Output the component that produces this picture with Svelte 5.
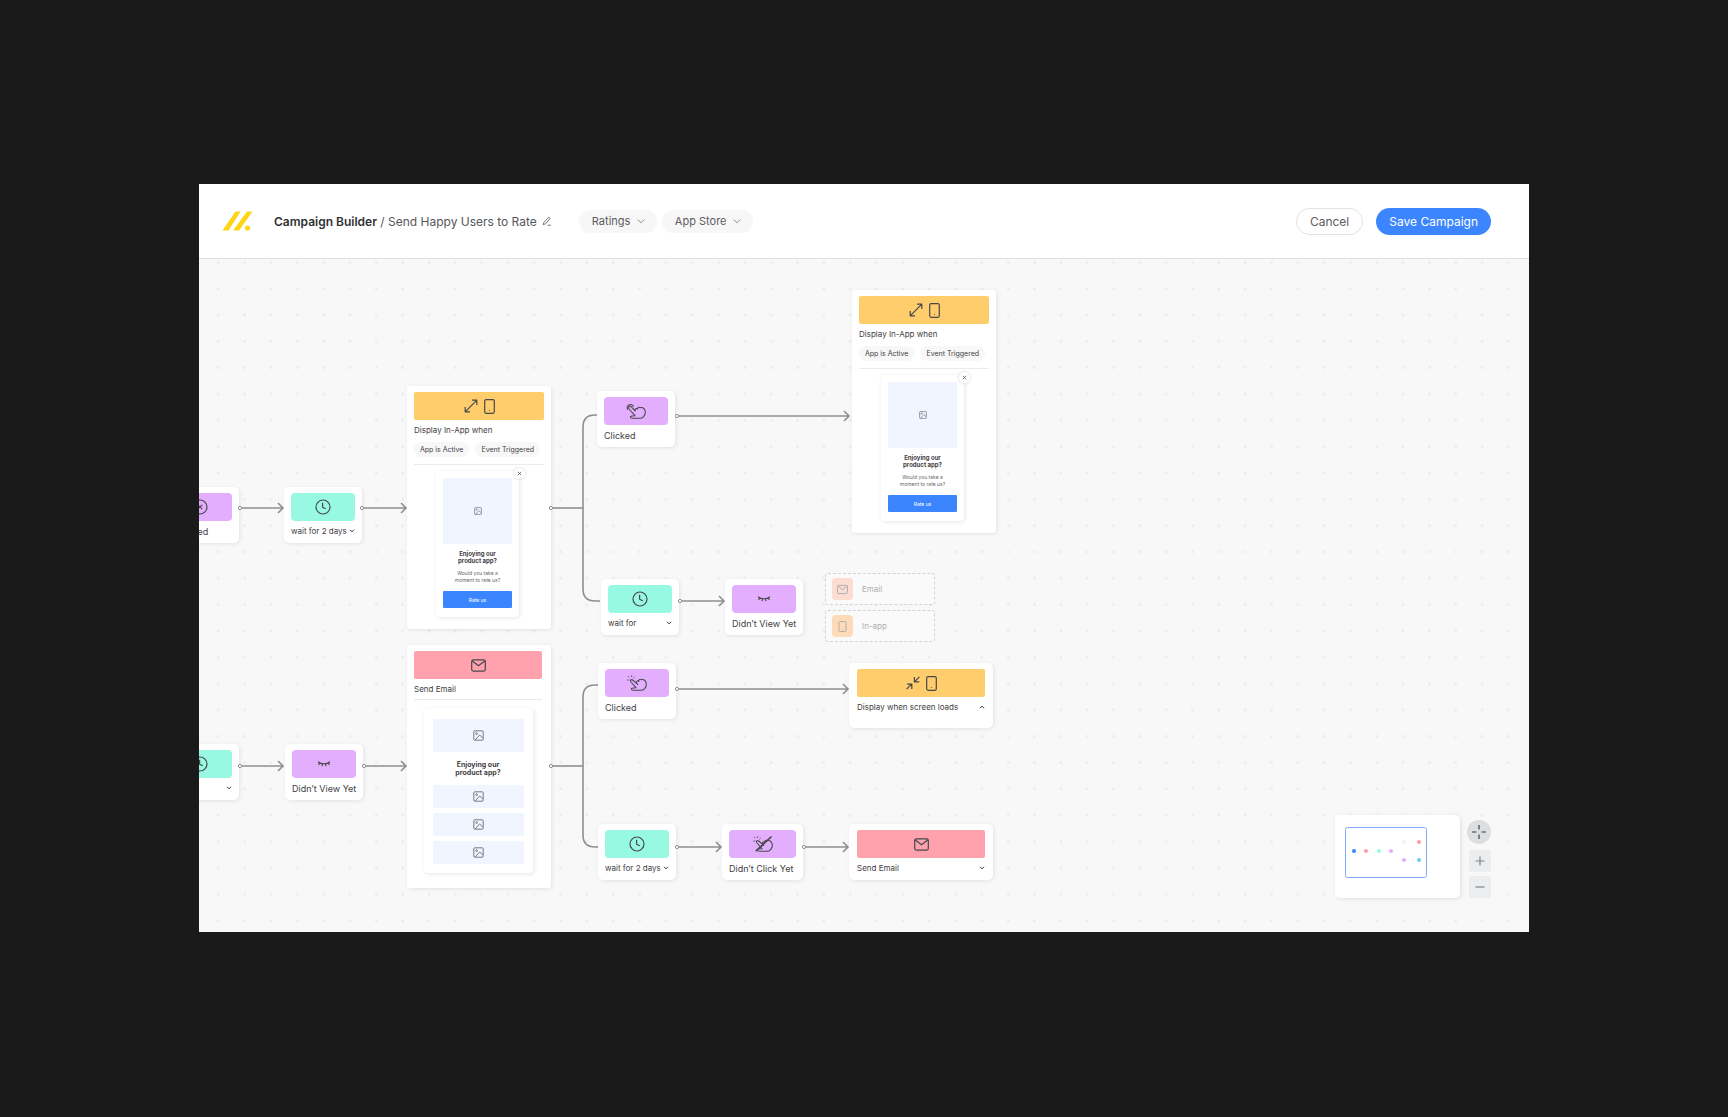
<script lang="ts">
	interface FlowNode {
		id: string;
		type: 'step' | 'inapp' | 'email' | 'action';
		x: number;
		y: number;
		width: number;
		color: string;
		icon: string;
		label: string;
		select?: boolean;
		chevron?: 'up' | 'down';
		tall?: boolean;
	}

	const nodes: FlowNode[] = [
		{ id: 'delivered', type: 'step', x: -38, y: 228, width: 78, color: 'purple', icon: 'cross', label: 'Delivered' },
		{ id: 'wait-1', type: 'step', x: 85, y: 228, width: 78, color: 'teal', icon: 'clock', label: 'wait for 2 days', select: true },
		{ id: 'inapp-1', type: 'inapp', x: 208, y: 127, width: 144, color: 'yellow', icon: 'expand', label: 'Display In-App when' },
		{ id: 'clicked-1', type: 'step', x: 398, y: 132, width: 78, color: 'purple', icon: 'tap', label: 'Clicked' },
		{ id: 'inapp-2', type: 'inapp', x: 653, y: 31, width: 144, color: 'yellow', icon: 'expand', label: 'Display In-App when' },
		{ id: 'wait-2', type: 'step', x: 402, y: 320, width: 78, color: 'teal', icon: 'clock', label: 'wait for', select: true },
		{ id: 'no-view-1', type: 'step', x: 526, y: 320, width: 78, color: 'purple', icon: 'eye', label: 'Didn’t View Yet' },
		{ id: 'wait-3', type: 'step', x: -38, y: 485, width: 78, color: 'teal', icon: 'clock', label: 'wait', select: true },
		{ id: 'no-view-2', type: 'step', x: 86, y: 485, width: 78, color: 'purple', icon: 'eye', label: 'Didn’t View Yet' },
		{ id: 'email-1', type: 'email', x: 208, y: 386, width: 144, color: 'red', icon: 'mail', label: 'Send Email' },
		{ id: 'clicked-2', type: 'step', x: 399, y: 404, width: 78, color: 'purple', icon: 'spark', label: 'Clicked' },
		{ id: 'wait-4', type: 'step', x: 399, y: 565, width: 78, color: 'teal', icon: 'clock', label: 'wait for 2 days', select: true },
		{ id: 'no-click', type: 'step', x: 523, y: 565, width: 81, color: 'purple', icon: 'noclick', label: 'Didn’t Click Yet' },
		{ id: 'screen-loads', type: 'action', x: 650, y: 404, width: 144, color: 'yellow', icon: 'collapse', label: 'Display when screen loads', chevron: 'up', tall: true },
		{ id: 'email-2', type: 'action', x: 650, y: 565, width: 144, color: 'red', icon: 'mail', label: 'Send Email', chevron: 'down' }
	];

	const arrows = [
		{ x1: 41, x2: 85, y: 249 },
		{ x1: 163, x2: 208, y: 249 },
		{ x1: 478, x2: 651, y: 157 },
		{ x1: 481, x2: 526, y: 342 },
		{ x1: 41, x2: 85, y: 507 },
		{ x1: 165, x2: 208, y: 507 },
		{ x1: 478, x2: 650, y: 430 },
		{ x1: 478, x2: 523, y: 588 },
		{ x1: 605, x2: 650, y: 588 }
	];

	// one output that splits to two nodes
	const branches = [
		{ x: 352, y: 249, top: 156, bottom: 342, endTop: 398, endBottom: 401 },
		{ x: 352, y: 507, top: 426, bottom: 588, endTop: 399, endBottom: 399 }
	];

	const options = [
		{ id: 'email', label: 'Email', icon: 'mail' },
		{ id: 'in-app', label: 'In-app', icon: 'phone' }
	];

	const mapDots = [
		{ x: 7, y: 23, fill: '#3b86ff' },
		{ x: 19, y: 23, fill: '#ff9fa8' },
		{ x: 32, y: 23, fill: '#97f9e1' },
		{ x: 44, y: 23, fill: '#e4aeff' },
		{ x: 57, y: 14, fill: '#eef4ff' },
		{ x: 72, y: 14, fill: '#ff9fa8' },
		{ x: 57, y: 32, fill: '#e4aeff' },
		{ x: 72, y: 32, fill: '#74cdea' }
	];
</script>

{#snippet chevron(up = false)}
	<svg class="chevron" class:up width="6" height="4" viewBox="0 0 6 4" aria-hidden="true">
		<path d="M1 .8 3 2.8 5 .8" />
	</svg>
{/snippet}

{#snippet picture(size: number)}
	<svg class="picture" width={size} height={size} viewBox="0 0 20 20" aria-hidden="true">
		<rect x="1.5" y="1.5" width="17" height="17" rx="1.5" />
		<circle cx="6.5" cy="6.5" r="1.6" />
		<path d="M4 18 12 9l6 5.5" />
	</svg>
{/snippet}

{#snippet phone()}
	<svg class="icon" width="11" height="15" viewBox="0 0 11 15" aria-hidden="true">
		<rect x=".7" y=".7" width="9.6" height="13.6" rx="1.5" />
		<path d="M5.5 11.3v.7" />
	</svg>
{/snippet}

{#snippet mail()}
	<svg class="icon" width="15" height="13" viewBox="0 0 15 13" aria-hidden="true">
		<rect x=".7" y=".9" width="13.6" height="11.2" rx="1.5" />
		<path d="M1 1.8 7.5 6.8 14 1.8" />
	</svg>
{/snippet}

{#snippet icon(name: string)}
	{#if name === 'clock'}
		<svg class="icon" width="16" height="16" viewBox="0 0 16 16" aria-hidden="true">
			<circle cx="8" cy="8" r="7" />
			<path d="M7.6 3.8v4.4l3.2 1.6" />
		</svg>
	{:else if name === 'cross'}
		<svg class="icon" width="16" height="16" viewBox="0 0 16 16" aria-hidden="true">
			<circle cx="8" cy="8" r="7" />
			<path d="m5.8 5.8 4.4 4.4m0-4.4-4.4 4.4" />
		</svg>
	{:else if name === 'eye'}
		<svg class="icon" width="14" height="6" viewBox="0 0 14 6" aria-hidden="true">
			<path d="M1 .7C4 3.4 10 3.4 13 .7M2.8 2 1.6 4M5.6 2.8 5 5.2M8.4 2.8 9 5.2M11.2 2l1.2 2" />
		</svg>
	{:else if name === 'tap' || name === 'spark' || name === 'noclick'}
		<svg class="hand" width="20" height="16" viewBox="0 0 60 48" aria-hidden="true">
			{#if name === 'tap'}
				<path d="M5 19A9.5 9.5 0 1 1 22 10" />
				<path d="M15 11 28 24C26 18 30 14 35 18 35 13 40 11 43 14 51 11 58 19 58 28 58 38 50 46 42 46H19C12 46 11 40 18 39L27 38 9 18C5 12 11 7 15 11Z" />
			{:else}
				<path class="spark" d="M2 15h4M4 4l2 2M14 2v3M22 7l-2 2" />
				<path d="M17 15 29 25C27 19 31 15 35 19 35 14 40 11 43 14 51 11 58 19 58 28 58 38 50 46 42 46H19C12 46 11 40 18 39L27 38 12 21C8 16 13 12 17 15ZM29 25l3 3" />
			{/if}
			{#if name === 'noclick'}
				<path class="slash" d="M10 44 54 3" />
			{/if}
		</svg>
	{:else if name === 'mail'}
		{@render mail()}
	{:else if name === 'expand'}
		<svg class="icon" width="14" height="14" viewBox="0 0 14 14" aria-hidden="true">
			<path d="M1.2 12.8 12.8 1.2M8 1.2h4.8V6M1.2 8v4.8H6" />
		</svg>
		{@render phone()}
	{:else if name === 'collapse'}
		<svg class="icon" width="14" height="14" viewBox="0 0 14 14" aria-hidden="true">
			<path d="M13.4.8 8.6 5.6M8.4 1v4.8h4.8M.6 13.2 5.4 8.4M1 8.2h4.8V13" />
		</svg>
		{@render phone()}
	{/if}
{/snippet}

<div class="page">
	<div class="window">
		<header class="header">
			<svg class="logo" width="31" height="20" viewBox="0 0 31 20" aria-label="Logo">
				<path d="M13.5.5h5L6.5 19.5H.5ZM25 .5h5.5L17 19.5h-6Z" />
				<circle cx="25.5" cy="17" r="2.6" />
			</svg>
			<h1 class="title"><strong>Campaign Builder</strong> / Send Happy Users to Rate</h1>
			<button class="edit" aria-label="Rename campaign">
				<svg width="10" height="10" viewBox="0 0 10 10">
					<path d="M1.2 8.6 2 6.2 6.8 1.2 8.2 2.4 3.6 7.8ZM5.5 9.2H9" />
				</svg>
			</button>
			<div class="filters">
				<label class="pill">
					<select aria-label="Goal"><option>Ratings</option></select>
					{@render chevron()}
				</label>
				<label class="pill">
					<select aria-label="Channel"><option>App Store</option></select>
					{@render chevron()}
				</label>
			</div>
			<div class="actions">
				<button class="cancel">Cancel</button>
				<button class="save">Save Campaign</button>
			</div>
		</header>

		<main class="canvas">
			<svg class="wires" width="100%" height="100%" aria-hidden="true">
				<defs>
					<pattern id="dots" x="6" y="-10" width="26.33" height="26.33" patternUnits="userSpaceOnUse">
						<circle cx="13.3" cy="13.3" r="1.4" fill="#ebebec" />
					</pattern>
				</defs>
				<rect width="100%" height="100%" fill="url(#dots)" />
			</svg>

			{#each nodes as node (node.id)}
				<section
					class="node {node.type}"
					class:tall={node.tall}
					style="left: {node.x}px; top: {node.y}px; width: {node.width}px"
				>
					<div class="banner {node.color}">{@render icon(node.icon)}</div>
					{#if node.select}
						<label class="label wait">
							<select aria-label="Delay"><option>{node.label}</option></select>
							{@render chevron()}
						</label>
					{:else if node.type === 'action'}
						<button class="label toggle">
							{node.label}
							{@render chevron(node.chevron === 'up')}
						</button>
					{:else}
						<div class="label">{node.label}</div>
					{/if}

					{#if node.type === 'inapp'}
						<div class="tags">
							<span>App is Active</span>
							<span>Event Triggered</span>
						</div>
						<hr />
						<div class="popup">
							<button class="close" aria-label="Close">
								<svg width="5" height="5" viewBox="0 0 5 5"><path d="m.8.8 3.4 3.4m0-3.4L.8 4.2" /></svg>
							</button>
							<div class="image">{@render picture(8)}</div>
							<h2>Enjoying our<br />product app?</h2>
							<p>Would you take a<br />moment to rate us?</p>
							<button class="rate">Rate us</button>
						</div>
					{:else if node.type === 'email'}
						<hr />
						<div class="letter">
							<div class="image hero">{@render picture(11)}</div>
							<h2>Enjoying our<br />product app?</h2>
							<div class="rows">
								{#each [1, 2, 3] as row (row)}
									<div class="image">{@render picture(11)}</div>
								{/each}
							</div>
						</div>
					{/if}
				</section>
			{/each}

			<div class="options">
				{#each options as option (option.id)}
					<button class="option">
						<span class="option-icon {option.id}">
							{#if option.icon === 'mail'}{@render mail()}{:else}{@render phone()}{/if}
						</span>
						{option.label}
					</button>
				{/each}
			</div>

			<svg class="wires" width="100%" height="100%" aria-hidden="true">
				{#each branches as b}
					<path d="M{b.x + 2} {b.y}H384" />
					<path
						d="M{b.endTop} {b.top}H396Q384 {b.top} 384 {b.top + 12}V{b.bottom - 12}Q384 {b.bottom} 396 {b.bottom}H{b.endBottom}"
					/>
					<circle cx={b.x} cy={b.y} r="1.6" />
				{/each}
				{#each arrows as a}
					<path d="M{a.x1 + 2} {a.y}H{a.x2 - 1}M{a.x2 - 6} {a.y - 5}L{a.x2 - 1} {a.y}L{a.x2 - 6} {a.y + 5}" />
					<circle cx={a.x1} cy={a.y} r="1.6" />
				{/each}
			</svg>

			<div class="tools">
				<div class="minimap">
					<svg width="83" height="52" viewBox="0 0 83 52" aria-label="Map">
						<rect x=".5" y=".5" width="81" height="50" rx="2" />
						{#each mapDots as dot}
							<circle cx={dot.x + 2} cy={dot.y + 1} r="2.1" fill={dot.fill} />
						{/each}
					</svg>
				</div>
				<div class="zoom">
					<button class="center" aria-label="Center">
						<svg width="14" height="14" viewBox="0 0 14 14"><path d="M7 0v4.5M7 9.5V14M0 7h4.5M9.5 7H14" /></svg>
					</button>
					<button aria-label="Zoom in">
						<svg width="10" height="10" viewBox="0 0 10 10"><path d="M5 .5v9M.5 5h9" /></svg>
					</button>
					<button aria-label="Zoom out">
						<svg width="10" height="10" viewBox="0 0 10 10"><path d="M.5 5h9" /></svg>
					</button>
				</div>
			</div>
		</main>
	</div>
</div>

<style>
	:global(body) {
		background-color: #1a1a1a;
	}

	.page {
		box-sizing: border-box;
		min-height: 100vh;
		padding: 184px 199px 185px;
		display: flex;
		font-family: Inter, 'Open Sans', sans-serif;
		color: #3f4043;
	}

	button,
	select {
		padding: 0;
		border: none;
		background: none;
		font: inherit;
		color: inherit;
		cursor: pointer;
	}

	select {
		appearance: none;
	}

	svg {
		display: block;
		flex-shrink: 0;
		fill: none;
	}

	.window {
		flex: 1;
		min-width: 0;
		display: flex;
		flex-direction: column;
		overflow: hidden;
		background-color: #f8f8f8;
	}

	.header {
		display: flex;
		align-items: center;
		height: 74px;
		padding: 0 38px 0 23px;
		background-color: #fff;
		border-bottom: 1px solid #e0e0e1;
		font-size: 12px;
	}

	.logo {
		margin-right: 21px;
		fill: #ffd414;
	}

	.title {
		margin: 0;
		font-size: 12px;
		font-weight: 400;
		white-space: nowrap;
		color: #55565a;
	}

	.title strong {
		font-weight: 600;
		color: #303134;
	}

	.edit {
		margin-left: 5px;
	}

	.edit svg {
		stroke: #55565a;
		stroke-width: 0.8;
	}

	.filters {
		display: flex;
		gap: 5px;
		margin-left: 27px;
		font-size: 11px;
		color: #5c5d61;
	}

	.pill {
		display: flex;
		align-items: center;
		gap: 5px;
		height: 23px;
		padding: 0 11px 0 13px;
		border-radius: 12px;
		background-color: #f7f7f7;
	}

	.chevron {
		stroke: #2c2d30;
		stroke-width: 1;
	}

	.chevron.up {
		transform: rotate(180deg);
	}

	.pill .chevron {
		width: 10px;
		height: 7px;
		stroke: #77787c;
		stroke-width: 0.5;
	}

	.actions {
		display: flex;
		gap: 13px;
		margin-left: auto;
		font-size: 12px;
	}

	.actions button {
		height: 27px;
		padding: 0 13px;
		border-radius: 14px;
		white-space: nowrap;
	}

	.actions .cancel {
		border: 1px solid #e2e2e3;
		background-color: #fff;
		color: #5c5d61;
	}

	.actions .save {
		background-color: #3b86ff;
		color: #fff;
	}

	.canvas {
		position: relative;
		flex: 1;
		min-height: 640px;
	}

	.wires {
		position: absolute;
		inset: 0;
		stroke: #8e8f92;
		stroke-width: 1.6;
		pointer-events: none;
	}

	.wires rect,
	.wires pattern circle {
		stroke: none;
	}

	.wires > circle {
		fill: #fff;
		stroke-width: 1;
	}

	.node {
		position: absolute;
		box-sizing: border-box;
		min-height: 56px;
		padding: 6px 7px 0;
		border-radius: 5px;
		background-color: #fff;
		box-shadow: 1px 1px 4px rgba(0, 0, 0, 0.09);
		font-size: 8px;
	}

	.node.step {
		font-size: 9px;
	}

	.node.inapp,
	.node.email {
		min-height: 243px;
		border-radius: 3px;
	}

	.node.email {
		padding-right: 9px;
	}

	.node.action {
		padding: 6px 8px 0;
	}

	.node.tall {
		min-height: 65px;
	}

	.banner {
		display: flex;
		align-items: center;
		justify-content: center;
		gap: 6px;
		height: 28px;
		border-radius: 4px;
	}

	.inapp .banner,
	.email .banner,
	.action .banner {
		border-radius: 2px;
	}

	.purple {
		background-color: #e4aeff;
	}

	.teal {
		background-color: #97f9e1;
	}

	.yellow {
		background-color: #ffcd6b;
	}

	.red {
		background-color: #ffa2ad;
	}

	.icon,
	.hand {
		stroke: #47484b;
		stroke-width: 1.2;
		stroke-linejoin: round;
	}

	.hand {
		stroke-width: 3.2;
		stroke-linecap: round;
	}

	.hand .spark {
		stroke-width: 2.4;
	}

	.hand .slash {
		stroke-width: 5;
	}

	.label {
		display: flex;
		align-items: center;
		justify-content: space-between;
		width: 100%;
		height: 20px;
		white-space: nowrap;
	}

	.toggle,
	.wait {
		font-size: 8px;
	}

	.tags {
		display: flex;
		gap: 6px;
		margin: 2px 0 7px;
		font-size: 7px;
	}

	.tags span {
		padding: 0 6px;
		border-radius: 8px;
		background-color: #f7f7f7;
		line-height: 15px;
		white-space: nowrap;
	}

	hr {
		height: 1px;
		margin: 0;
		border: none;
		background-color: #ebebec;
	}

	.popup,
	.letter {
		position: relative;
		box-sizing: border-box;
		border-radius: 4px;
		background-color: #fff;
		box-shadow: 1px 1px 4px rgba(0, 0, 0, 0.1);
		text-align: center;
	}

	.popup {
		width: 83px;
		margin: 6px 0 0 22px;
		padding: 7px 7px 9px;
	}

	.letter {
		width: 109px;
		margin: 8px auto 0;
		padding: 11px 9px 9px;
	}

	.close {
		position: absolute;
		top: -3px;
		right: -6px;
		display: grid;
		place-items: center;
		width: 11px;
		height: 11px;
		border-radius: 50%;
		background-color: #fff;
		box-shadow: 0 0 3px rgba(0, 0, 0, 0.2);
	}

	.close svg {
		stroke: #55565a;
		stroke-width: 0.8;
	}

	.image {
		display: grid;
		place-items: center;
		height: 23px;
		background-color: #f0f5ff;
	}

	.popup .image {
		height: 66px;
	}

	.image.hero {
		height: 33px;
	}

	.picture {
		stroke: #77787c;
		stroke-width: 1.8;
	}

	h2 {
		margin: 6px 0 0;
		font-size: 6px;
		font-weight: 700;
		line-height: 7px;
	}

	.letter h2 {
		margin: 9px 0 8px;
		font-size: 7px;
		line-height: 8px;
	}

	.popup p {
		margin: 6px 0 7px;
		font-size: 5px;
		line-height: 7px;
		color: #66676b;
	}

	.rate {
		display: block;
		width: 100%;
		height: 17px;
		border-radius: 1px;
		background-color: #3b86ff;
		font-size: 5px;
		color: #fff;
	}

	.rows {
		display: grid;
		gap: 5px;
	}

	.options {
		position: absolute;
		left: 626px;
		top: 314px;
		display: grid;
		gap: 5px;
		width: 110px;
	}

	.option {
		display: flex;
		align-items: center;
		gap: 9px;
		height: 32px;
		padding: 0 6px;
		border: 1px dashed #d3d3d5;
		border-radius: 3px;
		background-color: #fafafa;
		font-size: 8px;
		color: #adaeb1;
	}

	.option-icon {
		display: grid;
		place-items: center;
		width: 21px;
		height: 22px;
		border-radius: 4px;
		background-color: #fddcd2;
	}

	.option-icon.in-app {
		background-color: #fedbb8;
	}

	.option-icon .icon {
		width: 11px;
		height: 11px;
		stroke: #a8a8ad;
	}

	.tools {
		position: absolute;
		right: 38px;
		bottom: 34px;
		display: flex;
		align-items: flex-end;
		gap: 7px;
	}

	.minimap {
		box-sizing: border-box;
		width: 125px;
		height: 83px;
		padding: 12px 10px;
		border-radius: 5px;
		background-color: #fff;
		box-shadow: 1px 1px 4px rgba(0, 0, 0, 0.1);
	}

	.minimap rect {
		stroke: #82aaff;
	}

	.zoom {
		display: grid;
		justify-items: end;
		gap: 4px;
	}

	.zoom button {
		display: grid;
		place-items: center;
		width: 22px;
		height: 22px;
		border-radius: 2px;
		background-color: #ecedef;
	}

	.zoom svg {
		stroke: #808286;
		stroke-width: 1.2;
	}

	.zoom .center {
		width: 24px;
		height: 24px;
		margin-bottom: 2px;
		border-radius: 50%;
		background-color: #dcdfe0;
	}

	.zoom .center svg {
		stroke: #3f4043;
	}
</style>
